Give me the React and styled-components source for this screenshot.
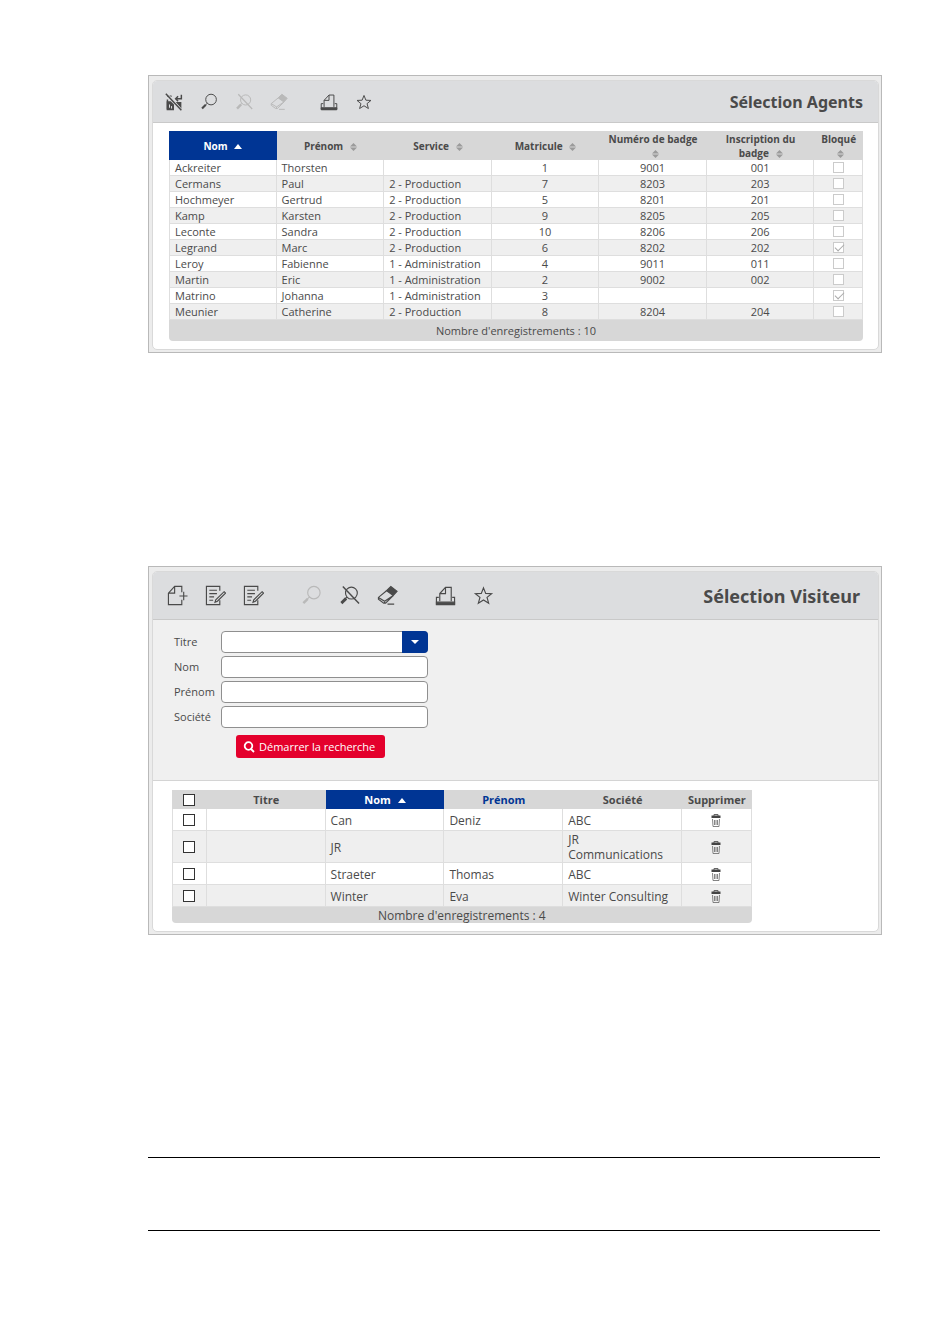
import { useState } from 'react'
import styled, { createGlobalStyle, css } from 'styled-components'

const GlobalStyle = createGlobalStyle`
  * {
    box-sizing: border-box;
  }

  body {
    margin: 0;
    background: #fff;
    color: #4a4a4a;
    font-family: 'Open Sans', 'Noto Sans', sans-serif;
    font-size: 11px;
  }

  button, input, select {
    font: inherit;
    color: inherit;
  }
`

const Page = styled.main`
  padding: 75px 68px 0 148px;
`

const Panel = styled.section`
  padding: 4px 2px 2px 3px;
  border: 1px solid #b9b9b9;
  background: #ececec;

  & + & {
    margin-top: 213px;
  }
`

const PanelInner = styled.div`
  border: 1px solid #d9d9d9;
  border-radius: 5px;
  background: #fff;
  overflow: hidden;
`

const Header = styled.header`
  display: flex;
  align-items: center;
  justify-content: space-between;
  height: ${({ $large }) => ($large ? 48 : 42)}px;
  padding: ${({ $large }) => ($large ? '0 18px 0 5px' : '0 15px 0 3px')};
  border-bottom: 1px solid #c9c9c9;
  background: #dcdddf;
`

const Title = styled.h1`
  margin: 0;
  font-family: 'Noto Sans', sans-serif;
  font-size: ${({ $large }) => ($large ? 18 : 16)}px;
  font-weight: bold;
`

const Toolbar = styled.div`
  display: flex;
  gap: ${({ $large }) => ($large ? 20 : 15)}px;
`

const ToolGroup = styled.div`
  display: flex;
`

const ToolButton = styled.button`
  display: flex;
  justify-content: center;
  align-items: center;
  width: ${({ $large }) => ($large ? 38 : 35)}px;
  height: 30px;
  padding: 0;
  border: 0;
  background: none;
  cursor: pointer;

  svg {
    width: ${({ $large }) => ($large ? 21 : 18)}px;
    height: ${({ $large }) => ($large ? 21 : 18)}px;
  }

  &:disabled {
    color: #b9b9b9;
    cursor: default;
  }
`

const SearchForm = styled.form`
  padding: 11px 21px 22px;
  border-bottom: 1px solid #d4d4d4;
  background: #f0f0f0;
`

const Field = styled.div`
  display: grid;
  grid-template-columns: 47px minmax(0, 207px);
  align-items: center;
  margin-bottom: 3px;
`

const Label = styled.label`
  line-height: 16px;
`

const control = css`
  width: 100%;
  height: 22px;
  padding: 0 6px;
  border: 1px solid #8f8f8f;
  border-radius: 4px;
  background: #fff;
`

const TextInput = styled.input`
  ${control}
`

const SelectBox = styled.div`
  position: relative;
`

const Select = styled.select`
  ${control}
  display: block;
  appearance: none;
`

const SelectArrow = styled.span`
  position: absolute;
  top: 0;
  right: 0;
  display: flex;
  justify-content: center;
  align-items: center;
  width: 26px;
  height: 22px;
  border-radius: 0 4px 4px 0;
  background: #003594;
  color: #fff;
  pointer-events: none;
`

const SearchButton = styled.button`
  display: flex;
  align-items: center;
  gap: 4px;
  height: 23px;
  margin: 7px 0 0 62px;
  padding: 0 10px 0 7px;
  border: 0;
  border-radius: 3px;
  background: #e4002c;
  color: #fff;
  cursor: pointer;
`

const TableArea = styled.div`
  padding: ${({ $compact }) => ($compact ? '8px 15px 8px 16px' : '9px 16px 8px 19px')};
`

const Table = styled.table`
  width: ${({ $width }) => $width};
  table-layout: fixed;
  border-spacing: 0;
`

const Th = styled.th`
  height: ${({ $compact }) => ($compact ? 29 : 19)}px;
  padding: 0 4px;
  background: ${({ $sorted }) => ($sorted ? '#003594' : '#d7d7d7')};
  color: ${({ $sorted, $link }) => ($sorted ? '#fff' : $link ? '#003594' : '#4a4a4a')};
  font-size: ${({ $compact }) => ($compact ? 10 : 11)}px;
  line-height: 14px;
`

const SortButton = styled.button`
  padding: 0;
  border: 0;
  background: none;
  font-weight: bold;
  line-height: 14px;
  cursor: pointer;

  svg {
    margin-left: 4px;
    vertical-align: -1px;
  }
`

const Td = styled.td`
  height: ${({ $compact }) => ($compact ? 16 : 22)}px;
  padding: ${({ $compact }) => ($compact ? '0 5px' : '1px 5px 0')};
  border-right: 1px solid #dedede;
  border-bottom: 1px solid #dedede;
  font-size: ${({ $compact }) => ($compact ? 11 : 12)}px;
  line-height: 15px;
  text-align: ${({ $center }) => ($center ? 'center' : 'left')};

  &:first-child {
    border-left: 1px solid #dedede;
  }

  tr:nth-child(even) > & {
    background: #efefef;
  }
`

const CompanyCell = styled(Td)`
  padding-right: 8px;
`

const FooterCell = styled.td`
  height: ${({ $compact }) => ($compact ? 21 : 16)}px;
  padding: 0;
  border-radius: 0 0 4px 4px;
  background: #d7d7d7;
  font-size: ${({ $compact }) => ($compact ? 11 : 12)}px;
  line-height: 15px;
  text-align: center;
`

const Checkbox = styled.input`
  appearance: none;
  display: block;
  width: ${({ $small }) => ($small ? 11 : 12)}px;
  height: ${({ $small }) => ($small ? 11 : 12)}px;
  margin: 0 auto;
  border: 1px solid #333;
  background: #fff;

  &:disabled {
    border-color: #cbcbcb;
  }

  &:checked::after {
    content: '';
    display: block;
    width: 8px;
    height: 4px;
    border: solid #aaa;
    border-width: 0 0 1px 1px;
    transform: translate(1px, 1px) rotate(-45deg);
  }
`

const DeleteButton = styled.button`
  display: block;
  margin: 0 auto;
  padding: 0;
  border: 0;
  background: none;
  cursor: pointer;

  svg {
    display: block;
  }
`

const Rule = styled.hr`
  height: 1px;
  margin: ${({ $top }) => $top}px 2px 0 0;
  border: 0;
  background: #000;
`

const Icon = ({ children }) => (
  <svg viewBox="0 0 22 22" fill="none" stroke="currentColor" strokeWidth="1.2" aria-hidden="true">
    {children}
  </svg>
)

const NoSelectionIcon = () => (
  <Icon>
    <path d="M3 4h5M3 8v12" strokeWidth="1.8" />
    <path d="M2 10h5l4 4v7H2zM13 11h7v9z" fill="currentColor" stroke="none" />
    <path d="M5.500 14v4M8 16v3" stroke="#dcdddf" />
    <path d="M20 2v5h-7m3-3-3 3 3 3" strokeWidth="1.8" />
    <path d="M3 1l18 20" stroke="#dcdddf" strokeWidth="1.5" />
    <path d="M1 1l19 20" strokeWidth="1.8" />
  </Icon>
)

const MagnifierIcon = () => (
  <Icon>
    <circle cx="13.5" cy="8" r="6.5" />
    <path d="M9 12.5l-2.500 2.300" />
    <path d="M7 14.500 2.500 19" strokeWidth="2.600" />
  </Icon>
)

const NoSearchIcon = () => (
  <Icon>
    <circle cx="13" cy="8.500" r="6.200" />
    <path d="M8.500 12.500 6.500 14.500" />
    <path d="M7.500 14 2.500 19" strokeWidth="3" />
    <path d="M4 1.500l17 18" strokeWidth="1.500" />
  </Icon>
)

const EraserIcon = () => (
  <Icon>
    <path d="M10 6 1.500 13v2l5.500 4h2l8-8M1.500 13l6.500 4 9-6M8 17v2M11 20h7" />
    <path d="M10 6l4.500-4.500 6.500 5-4 4.500z" fill="currentColor" />
  </Icon>
)

const PrintIcon = () => (
  <Icon>
    <path d="M4 13H1.500v7h19v-7H18M5 17V9l6-6.500h6V17M5 9h6V2.500" />
    <path d="M1.500 18h19v2.500h-19z" fill="currentColor" />
  </Icon>
)

const StarIcon = () => (
  <Icon>
    <path d="M11 3l2.300 5.800 6.200.3-4.800 3.900 1.700 6L11 15.600 5.600 19l1.700-6-4.800-3.900 6.200-.3z" />
  </Icon>
)

const NewIcon = () => (
  <Icon>
    <path d="M15.500 15.500v5H1.500V8.500l6.500-7h7.500v6M1.500 8.500H8v-7M13 11.500h8.500M17.500 7v9" />
  </Icon>
)

const EditIcon = () => (
  <Icon>
    <path d="M15.500 6V1.500h-14v19h14V16M4.500 5.500h8M4.500 9h8M4.500 12.500h5M4.500 16h4" />
    <path d="M20 7l1.500 1.500-8.500 8.500-2.500 1 .8-2.500z" />
  </Icon>
)

const SortIcon = () => (
  <svg width="7" height="8" viewBox="0 0 7 8" fill="#9b9b9b" aria-hidden="true">
    <path d="M0 3.500 3.500 0 7 3.500zM0 4.500h7L3.500 8z" />
  </svg>
)

const SortedIcon = () => (
  <svg width="8" height="8" viewBox="0 0 8 8" fill="currentColor" aria-hidden="true">
    <path d="M0 6 4 1l4 5z" />
  </svg>
)

const TrashIcon = () => (
  <svg width="10" height="13" viewBox="0 0 10 13" fill="none" stroke="#666" aria-hidden="true">
    <path d="M3 2V.5h4V2" />
    <path d="M.5 1.500h9v2.500h-9z" fill="#444" stroke="none" />
    <path d="M1.500 5 2 12.500h6L8.500 5M3.500 6v5M5 6v5M6.500 6v5" strokeWidth=".8" />
  </svg>
)

const AGENT_TOOLS = [
  [
    { label: 'Annuler la sélection', icon: NoSelectionIcon },
    { label: 'Rechercher', icon: MagnifierIcon },
    { label: 'Annuler la recherche', icon: NoSearchIcon, disabled: true },
    { label: 'Effacer', icon: EraserIcon, disabled: true },
  ],
  [
    { label: 'Imprimer', icon: PrintIcon },
    { label: 'Favori', icon: StarIcon },
  ],
]

const VISITOR_TOOLS = [
  [
    { label: 'Nouveau', icon: NewIcon },
    { label: 'Modifier', icon: EditIcon },
    { label: 'Modifier la sélection', icon: EditIcon },
  ],
  [
    { label: 'Rechercher', icon: MagnifierIcon, disabled: true },
    { label: 'Annuler la recherche', icon: NoSearchIcon },
    { label: 'Effacer', icon: EraserIcon },
  ],
  [
    { label: 'Imprimer', icon: PrintIcon },
    { label: 'Favori', icon: StarIcon },
  ],
]

const AGENT_COLUMNS = ['Nom', 'Prénom', 'Service', 'Matricule', 'Numéro de badge', 'Inscription du badge', 'Bloqué']

const AGENTS = [
  ['Ackreiter', 'Thorsten', '', '1', '9001', '001', false],
  ['Cermans', 'Paul', '2 - Production', '7', '8203', '203', false],
  ['Hochmeyer', 'Gertrud', '2 - Production', '5', '8201', '201', false],
  ['Kamp', 'Karsten', '2 - Production', '9', '8205', '205', false],
  ['Leconte', 'Sandra', '2 - Production', '10', '8206', '206', false],
  ['Legrand', 'Marc', '2 - Production', '6', '8202', '202', true],
  ['Leroy', 'Fabienne', '1 - Administration', '4', '9011', '011', false],
  ['Martin', 'Eric', '1 - Administration', '2', '9002', '002', false],
  ['Matrino', 'Johanna', '1 - Administration', '3', '', '', true],
  ['Meunier', 'Catherine', '2 - Production', '8', '8204', '204', false],
]

const VISITORS = [
  { title: '', name: 'Can', firstName: 'Deniz', company: 'ABC' },
  { title: '', name: 'JR', firstName: '', company: 'JR Communications' },
  { title: '', name: 'Straeter', firstName: 'Thomas', company: 'ABC' },
  { title: '', name: 'Winter', firstName: 'Eva', company: 'Winter Consulting' },
]

const FIELDS = [
  { id: 'nom', label: 'Nom' },
  { id: 'prenom', label: 'Prénom' },
  { id: 'societe', label: 'Société' },
]

const PanelHeader = ({ title, tools, large }) => (
  <Header $large={large}>
    <Toolbar $large={large}>
      {tools.map((group, index) => (
        <ToolGroup key={index}>
          {group.map(({ label, icon: ToolIcon, disabled }) => (
            <ToolButton key={label} type="button" aria-label={label} disabled={disabled} $large={large}>
              <ToolIcon />
            </ToolButton>
          ))}
        </ToolGroup>
      ))}
    </Toolbar>
    <Title $large={large}>{title}</Title>
  </Header>
)

const AgentTable = () => (
  <Table $width="100%">
    <colgroup>
      <col span="6" style={{ width: `${93 / 6}%` }} />
      <col />
    </colgroup>
    <thead>
      <tr>
        {AGENT_COLUMNS.map((column, index) => (
          <Th key={column} $compact $sorted={index === 0}>
            <SortButton type="button">
              {column} {index === 0 ? <SortedIcon /> : <SortIcon />}
            </SortButton>
          </Th>
        ))}
      </tr>
    </thead>
    <tbody>
      {AGENTS.map((agent) => (
        <tr key={agent[0]}>
          {agent.map((value, index) => (
            <Td key={AGENT_COLUMNS[index]} $compact $center={index > 2}>
              {typeof value === 'boolean' ? (
                <Checkbox type="checkbox" aria-label={`Bloqué ${agent[0]}`} defaultChecked={value} disabled $small />
              ) : (
                value
              )}
            </Td>
          ))}
        </tr>
      ))}
    </tbody>
    <tfoot>
      <tr>
        <FooterCell $compact colSpan="7">
          Nombre d'enregistrements : {AGENTS.length}
        </FooterCell>
      </tr>
    </tfoot>
  </Table>
)

const VisitorTable = () => {
  const [selected, setSelected] = useState([])

  const toggle = (name) => {
    setSelected(selected.includes(name) ? selected.filter((item) => item !== name) : [...selected, name])
  }

  const toggleAll = () => {
    setSelected(selected.length === VISITORS.length ? [] : VISITORS.map(({ name }) => name))
  }

  return (
    <Table $width="84%">
      <colgroup>
        <col style={{ width: '6%' }} />
        <col span="4" style={{ width: '20.5%' }} />
        <col />
      </colgroup>
      <thead>
        <tr>
          <Th>
            <Checkbox
              type="checkbox"
              aria-label="Tout sélectionner"
              checked={selected.length === VISITORS.length}
              onChange={toggleAll}
            />
          </Th>
          <Th>Titre</Th>
          <Th $sorted>
            <SortButton type="button">
              Nom <SortedIcon />
            </SortButton>
          </Th>
          <Th $link>
            <SortButton type="button">Prénom</SortButton>
          </Th>
          <Th>Société</Th>
          <Th>Supprimer</Th>
        </tr>
      </thead>
      <tbody>
        {VISITORS.map(({ title, name, firstName, company }) => (
          <tr key={name}>
            <Td>
              <Checkbox
                type="checkbox"
                aria-label={`Sélectionner ${name}`}
                checked={selected.includes(name)}
                onChange={() => {
                  toggle(name)
                }}
              />
            </Td>
            <Td>{title}</Td>
            <Td>{name}</Td>
            <Td>{firstName}</Td>
            <CompanyCell>{company}</CompanyCell>
            <Td>
              <DeleteButton type="button" aria-label={`Supprimer ${name}`}>
                <TrashIcon />
              </DeleteButton>
            </Td>
          </tr>
        ))}
      </tbody>
      <tfoot>
        <tr>
          <FooterCell colSpan="6">Nombre d'enregistrements : {VISITORS.length}</FooterCell>
        </tr>
      </tfoot>
    </Table>
  )
}

const App = () => {
  return (
    <>
      <GlobalStyle />
      <Page>
        <Panel>
          <PanelInner>
            <PanelHeader title="Sélection Agents" tools={AGENT_TOOLS} />
            <TableArea $compact>
              <AgentTable />
            </TableArea>
          </PanelInner>
        </Panel>
        <Panel>
          <PanelInner>
            <PanelHeader title="Sélection Visiteur" tools={VISITOR_TOOLS} large />
            <SearchForm onSubmit={(event) => event.preventDefault()}>
              <Field>
                <Label htmlFor="titre">Titre</Label>
                <SelectBox>
                  <Select id="titre">
                    <option value="" aria-label="Aucun titre" />
                  </Select>
                  <SelectArrow>
                    <svg width="8" height="4" viewBox="0 0 8 4" fill="currentColor" aria-hidden="true">
                      <path d="M0 0h8L4 4z" />
                    </svg>
                  </SelectArrow>
                </SelectBox>
              </Field>
              {FIELDS.map(({ id, label }) => (
                <Field key={id}>
                  <Label htmlFor={id}>{label}</Label>
                  <TextInput id={id} type="text" />
                </Field>
              ))}
              <SearchButton type="submit">
                <svg width="12" height="12" viewBox="0 0 12 12" fill="none" stroke="currentColor" strokeWidth="1.8" aria-hidden="true">
                  <circle cx="5.5" cy="5" r="3.8" />
                  <path d="M8 8l3 3" />
                </svg>
                Démarrer la recherche
              </SearchButton>
            </SearchForm>
            <TableArea>
              <VisitorTable />
            </TableArea>
          </PanelInner>
        </Panel>
        <Rule $top={222} />
        <Rule $top={72} />
      </Page>
    </>
  )
}

export default App
